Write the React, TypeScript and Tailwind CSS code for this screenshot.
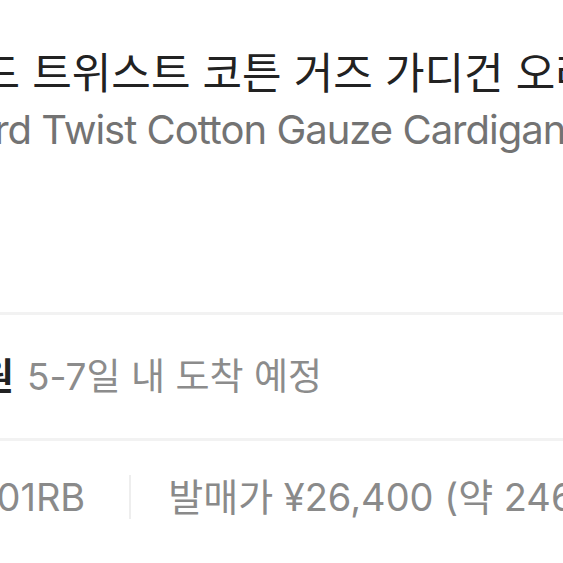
export default function App() {
  return (
    <div
      className="w-[563px] h-[563px] overflow-hidden bg-white"
      style={{ fontFamily: '"Inter", "Noto Sans CJK KR", sans-serif' }}
    >
      <div className="pt-[47px] whitespace-nowrap">
        <h1 className="-ml-[59px] text-[43px] leading-[52px] text-[#222222] font-normal">
          하드 트위스트 코튼 거즈 가디건 오라리
        </h1>
        <p className="-ml-[56px] mt-[7px] text-[40px] leading-[48px] tracking-[-1px] text-[#737373]">
          Hard Twist Cotton Gauze Cardigan Light Gray
        </p>
      </div>

      <div className="mt-[158px] h-[3px] bg-[#f2f2f2]" />

      <div className="h-[123px] flex items-center whitespace-nowrap text-[37px]">
        <div className="-ml-[274px] flex items-center">
          <span className="font-bold text-[#222222]">일반배송 5,000원</span>
          <span className="ml-[13px] text-[#8c8c8c]">5-7일 내 도착 예정</span>
        </div>
      </div>

      <div className="h-[3px] bg-[#f2f2f2]" />

      <div className="h-[112px] flex items-center whitespace-nowrap text-[38px] text-[#8a8a8a]">
        <div className="-ml-[129px] flex items-center">
          <span>A24SC01RB</span>
          <span className="ml-[44px] mr-[37px] w-[2px] h-[44px] bg-[#eeeeee]" />
          <span>발매가 ¥26,400 (약 246,000원)</span>
        </div>
      </div>
    </div>
  );
}
